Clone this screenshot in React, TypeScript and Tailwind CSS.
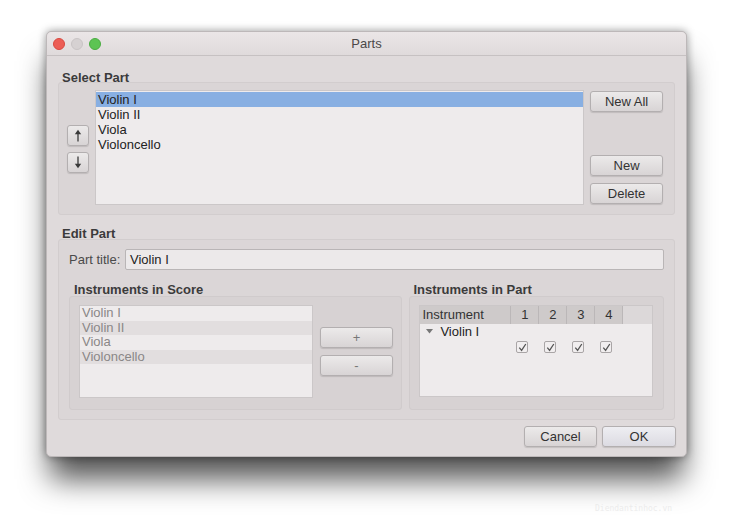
import React from 'react';

const btn =
  'flex items-center justify-center rounded-[3px] border border-[#b3afb0] bg-gradient-to-b from-[#eceaea] to-[#d8d4d5] shadow-[0_1px_1px_rgba(0,0,0,0.12)] text-[13px] text-[#333]';

function Arrow({ down }: { down?: boolean }) {
  return (
    <svg width="10" height="13" viewBox="0 0 10 13" className={down ? 'rotate-180' : ''}>
      <line x1="5" y1="3" x2="5" y2="12.5" stroke="#3a3a3a" strokeWidth="1.3" />
      <path d="M1.8 5.2 L5 0.8 L8.2 5.2 Z" fill="#3a3a3a" />
    </svg>
  );
}

function Check() {
  return (
    <div className="w-[12px] h-[12px] border border-[#a9a5a6] rounded-[2px] bg-[#f1eeef] flex items-center justify-center">
      <svg width="9" height="9" viewBox="0 0 9 9">
        <path d="M1.3 4.6 L3.6 7.4 L7.8 1" fill="none" stroke="#555" strokeWidth="1.3" />
      </svg>
    </div>
  );
}

function GroupLabel({ text, className = '' }: { text: string; className?: string }) {
  return (
    <div className={`h-[13px] leading-[13px] text-[13px] font-bold text-[#3b3b3b] ${className}`}>{text}</div>
  );
}

const parts = ['Violin I', 'Violin II', 'Viola', 'Violoncello'];

export default function App() {
  return (
    <div className="w-[737px] h-[526px] bg-white pt-[31px] pl-[46px] overflow-hidden font-['Liberation_Sans',Arial,sans-serif]">
      <div className="w-[641px] h-[426px] rounded-[5px] bg-[#dfdadb] border border-[#bdb8b9] shadow-[0_26px_30px_-4px_rgba(0,0,0,0.68),0_0_9px_rgba(0,0,0,0.4)] flex flex-col">
        {/* title bar */}
        <div className="h-[24px] shrink-0 grid grid-cols-[1fr_auto_1fr] items-center px-[6px] rounded-t-[5px] bg-gradient-to-b from-[#ebe6e7] to-[#dfdadb] border-b border-[#c6c1c2]">
          <div className="flex items-center gap-[6px]">
            <span className="w-[12px] h-[12px] rounded-full bg-[#ec5d55] border border-[#d9483f]" />
            <span className="w-[12px] h-[12px] rounded-full bg-[#d6d1d2] border border-[#c9c4c5]" />
            <span className="w-[12px] h-[12px] rounded-full bg-[#5dc453] border border-[#4aad41]" />
          </div>
          <div className="text-[13px] text-[#4b4848]">Parts</div>
          <div />
        </div>

        <div className="flex flex-col px-[11px] pt-[15px]">
          {/* Select Part */}
          <GroupLabel text="Select Part" className="pl-[4px]" />
          <div className="-mt-[2px] h-[133px] rounded-[3px] border border-[#d2cdce] bg-[#dad5d6] flex pl-[8px] pr-[11px] pt-[7px] pb-[9px]">
            <div className="w-[22px] flex flex-col justify-center gap-[6px] pt-[3px]">
              <div className={`${btn} w-[22px] h-[21px]`}>
                <Arrow />
              </div>
              <div className={`${btn} w-[22px] h-[21px]`}>
                <Arrow down />
              </div>
            </div>
            <div className="ml-[6px] w-[490px] h-[115px] bg-[#eeebec] border border-[#cbc7c8] pt-[1px]">
              {parts.map((p, i) => (
                <div
                  key={p}
                  className={`h-[15px] leading-[15px] pl-[2px] text-[13px] text-[#222] ${i === 0 ? 'bg-[#88afe2]' : ''}`}
                >
                  {p}
                </div>
              ))}
            </div>
            <div className="ml-[6px] w-[73px] flex flex-col">
              <div className={`${btn} h-[21px] mt-[1px]`}>New All</div>
              <div className={`${btn} h-[21px] mt-[43px]`}>New</div>
              <div className={`${btn} h-[21px] mt-[7px]`}>Delete</div>
            </div>
          </div>

          {/* Edit Part */}
          <GroupLabel text="Edit Part" className="pl-[4px] mt-[12px]" />
          <div className="-mt-[1px] h-[181px] rounded-[3px] border border-[#d2cdce] bg-[#dbd6d7] flex flex-col pl-[10px] pr-[10px] pt-[9px]">
            <div className="flex items-center h-[21px]">
              <div className="w-[56px] text-[13px] text-[#4a4a4a]">Part title:</div>
              <div className="flex-1 h-[21px] bg-[#ece9ea] border border-[#b9b5b6] rounded-[2px] pl-[4px] text-[13px] leading-[19px] text-[#222]">
                Violin I
              </div>
            </div>

            <div className="flex gap-[7px] mt-[13px]">
              {/* Instruments in Score */}
              <div className="w-[334px] flex flex-col">
                <GroupLabel text="Instruments in Score" className="pl-[5px]" />
                <div className="h-[114px] rounded-[3px] border border-[#d0cbcc] bg-[#d7d2d3] flex pl-[9px] pt-[8px]">
                  <div className="w-[234px] h-[93px] bg-[#eeebec] border border-[#cbc7c8]">
                    {parts.map((p, i) => (
                      <div
                        key={p}
                        className={`h-[14.5px] leading-[14.5px] pl-[2px] text-[13px] text-[#8a8787] ${i % 2 === 1 ? 'bg-[#e2dedf]' : ''}`}
                      >
                        {p}
                      </div>
                    ))}
                  </div>
                  <div className="ml-[7px] w-[73px] flex flex-col pt-[22px] gap-[7px]">
                    <div className={`${btn} h-[21px] text-[#777]`}>+</div>
                    <div className={`${btn} h-[21px] text-[#777]`}>-</div>
                  </div>
                </div>
              </div>

              {/* Instruments in Part */}
              <div className="w-[255px] flex flex-col">
                <GroupLabel text="Instruments in Part" className="pl-[4px]" />
                <div className="h-[114px] rounded-[3px] border border-[#d0cbcc] bg-[#d7d2d3] pl-[9px] pt-[8px]">
                  <div className="w-[234px] h-[92px] bg-[#eeebec] border border-[#cbc7c8] flex flex-col">
                    <div className="h-[18px] flex bg-[#dcd8d9] text-[13px] text-[#333] leading-[18px]">
                      <div className="w-[91px] pl-[2px] bg-[#cecaca] border-r border-[#bbb7b8]">Instrument</div>
                      {['1', '2', '3', '4'].map((n) => (
                        <div key={n} className="w-[28px] text-center bg-[#cecaca] border-r border-[#bbb7b8]">
                          {n}
                        </div>
                      ))}
                    </div>
                    <div className="h-[15px] flex items-center text-[13px] text-[#222]">
                      <svg width="7" height="5" viewBox="0 0 7 5" className="ml-[6px]">
                        <path d="M0 0 L7 0 L3.5 4.5 Z" fill="#777" />
                      </svg>
                      <span className="ml-[7px]">Violin I</span>
                    </div>
                    <div className="h-[16px] flex items-center pl-[91px]">
                      {[0, 1, 2, 3].map((i) => (
                        <div key={i} className="w-[28px] pl-[5px]">
                          <Check />
                        </div>
                      ))}
                    </div>
                  </div>
                </div>
              </div>
            </div>
          </div>

          {/* bottom buttons */}
          <div className="flex justify-end gap-[5px] mt-[6px] -mr-[1px]">
            <div className={`${btn} w-[73px] h-[21px]`}>Cancel</div>
            <div className={`${btn} w-[74px] h-[21px] border-[#93a6c8] from-[#eeeef2] to-[#dcdbe2]`}>OK</div>
          </div>
        </div>
      </div>
      <div className="ml-[549px] mt-[46px] text-[8px] font-['DejaVu_Sans_Mono',monospace] text-[#ececec]">
        Diendantinhoc.vn
      </div>
    </div>
  );
}
